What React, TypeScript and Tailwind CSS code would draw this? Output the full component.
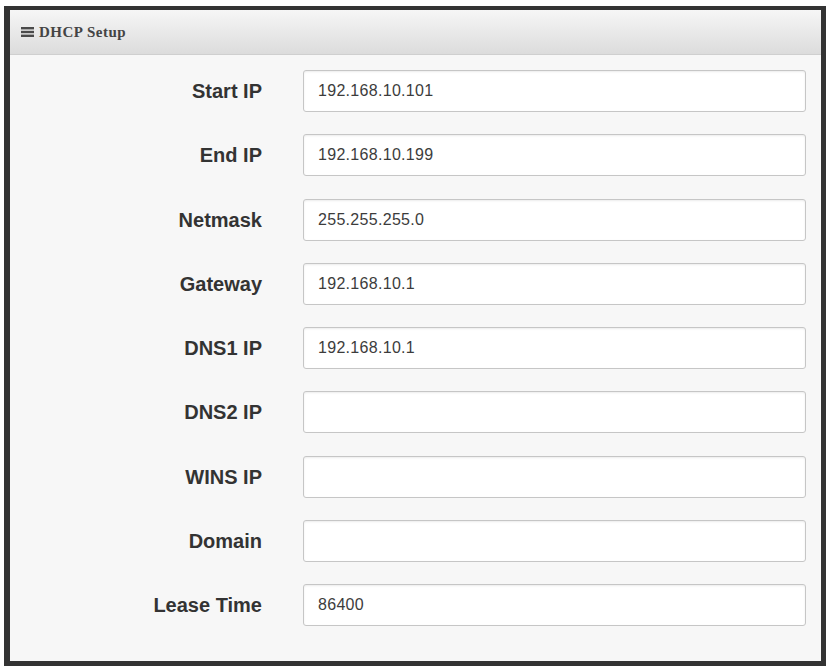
import { useState } from "react";

interface Field {
  name: string;
  label: string;
  value: string;
}

const fields: Field[] = [
  { name: "startIp", label: "Start IP", value: "192.168.10.101" },
  { name: "endIp", label: "End IP", value: "192.168.10.199" },
  { name: "netmask", label: "Netmask", value: "255.255.255.0" },
  { name: "gateway", label: "Gateway", value: "192.168.10.1" },
  { name: "dns1", label: "DNS1 IP", value: "192.168.10.1" },
  { name: "dns2", label: "DNS2 IP", value: "" },
  { name: "wins", label: "WINS IP", value: "" },
  { name: "domain", label: "Domain", value: "" },
  { name: "lease", label: "Lease Time", value: "86400" },
];

export default function App() {
  const [values, setValues] = useState<Record<string, string>>(
    Object.fromEntries(fields.map((f) => [f.name, f.value]))
  );

  return (
    <div className="w-[828px] h-[667px] bg-white pt-[6px] pl-[4px] overflow-hidden">
      <div className="w-[822px] h-[660px] border-[#333] border-t-[4px] border-l-[6px] border-r-[5px] border-b-[5px] bg-[#f7f7f7] flex flex-col">
        {/* panel title bar */}
        <div className="h-[45px] flex items-center pl-[11px] bg-gradient-to-b from-[#f6f6f6] to-[#dcdcdc] border-b border-[#cfcfcf]">
          <svg width="14" height="12" viewBox="0 0 14 12" className="mr-[4px]">
            <rect x="0" y="1" width="13" height="2.4" fill="#4a4a4a" />
            <rect x="0" y="4.8" width="13" height="2.4" fill="#4a4a4a" />
            <rect x="0" y="8.6" width="13" height="2.4" fill="#4a4a4a" />
          </svg>
          <span className="font-['Liberation_Serif',serif] font-bold text-[15px] text-[#444] tracking-[0.5px]">
            DHCP Setup
          </span>
        </div>

        <div className="flex flex-col gap-[22.3px] pt-[15px]">
          {fields.map((f) => (
            <div key={f.name} className="flex items-center">
              <label
                htmlFor={f.name}
                className="w-[252px] text-right font-['Liberation_Sans',Arial,sans-serif] font-bold text-[20px] text-[#333]"
              >
                {f.label}
              </label>
              <input
                id={f.name}
                value={values[f.name]}
                onChange={(e) =>
                  setValues({ ...values, [f.name]: e.target.value })
                }
                className="ml-[41px] w-[503px] h-[42px] bg-white border border-[#c6c6c6] rounded-[3px] shadow-[inset_0_1px_2px_rgba(0,0,0,0.08)] px-[14px] font-['Liberation_Sans',Arial,sans-serif] text-[16px] tracking-[0.3px] text-[#3c3c3c] outline-none"
              />
            </div>
          ))}
        </div>
      </div>
    </div>
  );
}
